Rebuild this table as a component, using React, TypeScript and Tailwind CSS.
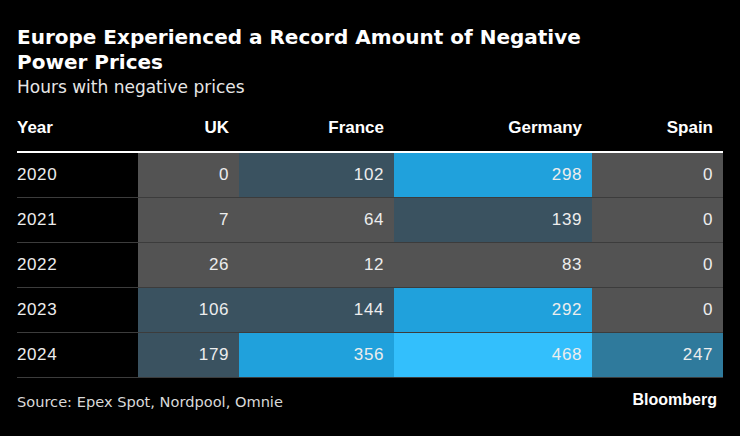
const GRAY = "bg-[#535353]";
const TEAL = "bg-[#3a5260]";
const BLUE = "bg-[#20a1dc]";
const BRIGHT = "bg-[#33bffc]";
const MID = "bg-[#2f7a9c]";

const rows: { year: string; cells: [string, string][] }[] = [
  { year: "2020", cells: [["0", GRAY], ["102", TEAL], ["298", BLUE], ["0", GRAY]] },
  { year: "2021", cells: [["7", GRAY], ["64", GRAY], ["139", TEAL], ["0", GRAY]] },
  { year: "2022", cells: [["26", GRAY], ["12", GRAY], ["83", GRAY], ["0", GRAY]] },
  { year: "2023", cells: [["106", TEAL], ["144", TEAL], ["292", BLUE], ["0", GRAY]] },
  { year: "2024", cells: [["179", TEAL], ["356", BLUE], ["468", BRIGHT], ["247", MID]] },
];

const headers = ["UK", "France", "Germany", "Spain"];
const cols = "grid grid-cols-[121px_101px_155px_198px_131px]";

export default function App() {
  return (
    <div className="h-[436px] w-[740px] overflow-hidden bg-black pl-[17px] pr-[17px] pt-[25px] text-white">
      <h1 className="font-['DejaVu_Sans',sans-serif] text-[20px] font-bold leading-[25px] text-white">
        Europe Experienced a Record Amount of Negative
        <br />
        Power Prices
      </h1>
      <p className="font-['DejaVu_Sans',sans-serif] text-[17px] leading-[24px] text-[#e6e6e6]">
        Hours with negative prices
      </p>

      <div className="mt-[12px] w-[706px] font-['Liberation_Sans',Arial,sans-serif]">
        <div className={`${cols} h-[42px] items-center border-b-2 border-white pb-[6px] text-[17px] font-bold`}>
          <div>Year</div>
          {headers.map((h) => (
            <div key={h} className="pr-[10px] text-right">
              {h}
            </div>
          ))}
        </div>
        {rows.map((r) => (
          <div
            key={r.year}
            className={`${cols} h-[45px] border-b border-[#3c3c3c] text-[17px] tracking-[0.6px] text-[#ededed]`}
          >
            <div className="flex items-center">{r.year}</div>
            {r.cells.map(([v, c], i) => (
              <div key={i} className={`flex items-center justify-end pr-[10px] ${c}`}>
                {v}
              </div>
            ))}
          </div>
        ))}
      </div>

      <div className="mt-[10px] flex w-[706px] items-center justify-between">
        <span className="font-['DejaVu_Sans',sans-serif] text-[14.6px] text-[#d9d9d9]">
          Source: Epex Spot, Nordpool, Omnie
        </span>
        <span className="mb-[3px] pr-[6px] font-['Liberation_Sans',Arial,sans-serif] text-[16px] font-bold text-white">
          Bloomberg
        </span>
      </div>
    </div>
  );
}
